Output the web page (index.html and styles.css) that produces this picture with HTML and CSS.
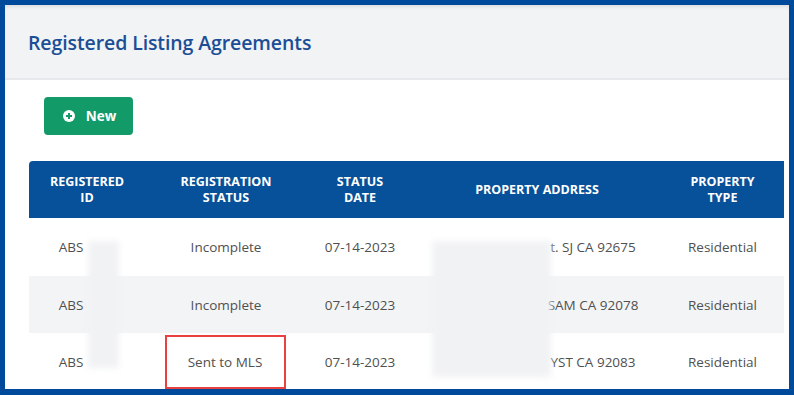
FILE: index.html
```html
<!DOCTYPE html>
<html>
<head>
<meta charset="utf-8">
<link rel="stylesheet" href="styles.css">
</head>
<body>
<div class="frame">
  <div class="page-head">
    <h1 class="title">Registered Listing Agreements</h1>
  </div>
  <div class="content">
    <button class="btn-new">
      <svg class="btn-icon" width="12" height="12" viewBox="0 0 12 12"><circle cx="6" cy="6" r="6" fill="#fff"/><path d="M6 3v6M3 6h6" stroke="#149a69" stroke-width="2"/></svg>
      <span>New</span>
    </button>
    <div class="table-wrap">
      <table class="grid">
        <colgroup>
          <col class="c1"><col class="c2"><col class="c3"><col class="c4"><col class="c5">
        </colgroup>
        <thead>
          <tr>
            <th>REGISTERED<br>ID</th>
            <th>REGISTRATION<br>STATUS</th>
            <th>STATUS<br>DATE</th>
            <th>PROPERTY ADDRESS</th>
            <th>PROPERTY<br>TYPE</th>
          </tr>
        </thead>
        <tbody>
          <tr>
            <td><span class="idtxt">ABS</span><span class="idpad"></span></td>
            <td>Incomplete</td>
            <td>07-14-2023</td>
            <td><span class="addrpad"></span>t. SJ CA 92675</td>
            <td>Residential</td>
          </tr>
          <tr class="alt">
            <td><span class="idtxt">ABS</span><span class="idpad"></span></td>
            <td>Incomplete</td>
            <td>07-14-2023</td>
            <td><span class="addrpad"></span>SAM CA 92078</td>
            <td>Residential</td>
          </tr>
          <tr>
            <td><span class="idtxt">ABS</span><span class="idpad"></span></td>
            <td><span class="highlight">Sent to MLS</span></td>
            <td>07-14-2023</td>
            <td><span class="addrpad"></span>YST CA 92083</td>
            <td>Residential</td>
          </tr>
        </tbody>
      </table>
      <div class="blur blur-id"></div>
      <div class="blur blur-addr"></div>
    </div>
  </div>
</div>
</body>
</html>
```
FILE: styles.css
```css
* { box-sizing: border-box; }
html, body { margin: 0; padding: 0; }
body {
  width: 794px;
  height: 395px;
  overflow: hidden;
  font-family: "Open Sans", "Noto Sans", sans-serif;
  background: #004a9c;
}
.frame {
  width: 794px;
  height: 395px;
  border: 5px solid #004a9c;
  border-bottom-width: 6px;
  background: #fff;
  overflow: hidden;
}
.page-head {
  height: 75px;
  background: #f2f3f5;
  border-bottom: 2px solid #e7e8eb;
  box-shadow: inset 0 3px 4px -2px rgba(0,0,0,0.12);
  padding: 0 0 0 23px;
  display: flex;
  align-items: center;
}
.title {
  margin: 0;
  font-size: 19.5px;
  font-weight: 600;
  color: #1b4e95;
  letter-spacing: -0.1px;
  padding-top: 2px;
}
.content {
  padding: 17px 0 0 24px;
}
.btn-new {
  margin-left: 15px;
  width: 89px;
  height: 38px;
  background: #139a69;
  border: none;
  border-radius: 4px;
  color: #fff;
  font-family: "Open Sans", sans-serif;
  font-weight: 700;
  font-size: 13.5px;
  display: flex;
  align-items: center;
  justify-content: center;
  gap: 11px;
  padding: 0 0 0 2px;
}
.btn-icon { display: block; }
.table-wrap {
  position: relative;
  margin-top: 26px;
  width: 755px;
}
.grid {
  width: 755px;
  border-collapse: collapse;
  table-layout: fixed;
}
.c1 { width: 116px; }
.c2 { width: 162px; }
.c3 { width: 106px; }
.c4 { width: 248px; }
.c5 { width: 123px; }
.grid th {
  background: #07519a;
  color: #fff;
  font-size: 12.5px;
  font-weight: 700;
  line-height: 16px;
  height: 57px;
  padding: 0 2px;
  text-align: center;
  vertical-align: middle;
}
.grid th:first-child { border-top-left-radius: 4px; }
.grid td {
  height: 57px;
  text-align: center;
  vertical-align: middle;
  font-size: 13.5px;
  color: #505050;
  padding: 0;
  white-space: nowrap;
}
.grid tbody tr:first-child td { height: 58px; }
.grid tr.alt td { background: #f3f4f6; }
.idtxt { display: inline-block; }
.idpad { display: inline-block; width: 32px; height: 1px; }
.addrpad { display: inline-block; width: 112px; height: 1px; }
.highlight {
  display: inline-block;
  width: 121px;
  height: 54px;
  line-height: 50px;
  border: 2px solid #e8413f;
  margin-left: -2px;
}
.blur {
  position: absolute;
  background: #f1f2f4;
  filter: blur(3px);
}
.blur-id {
  left: 59px;
  top: 80px;
  width: 31px;
  height: 127px;
}
.blur-addr {
  left: 403px;
  top: 80px;
  width: 119px;
  height: 136px;
}
```
